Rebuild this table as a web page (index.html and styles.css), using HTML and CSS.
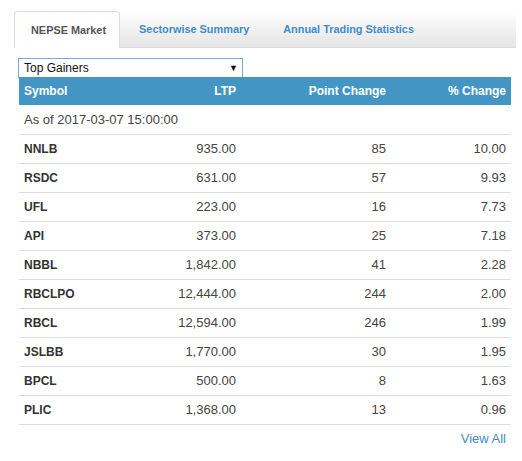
FILE: index.html
```html
<!DOCTYPE html>
<html lang="en">
<head>
    <meta charset="UTF-8">
    <meta name="viewport" content="width=device-width, initial-scale=1.0">
    <title>NEPSE Market</title>
    <link rel="stylesheet" href="styles.css">
</head>
<body>
    <div class="wrap">
        <ul class="tabs">
            <li class="tab active">NEPSE Market</li>
            <li class="tab">Sectorwise Summary</li>
            <li class="tab">Annual Trading Statistics</li>
        </ul>
        <div class="panel">
            <div class="picker">
                <span>Top Gainers</span>
                <span class="arrow">&#9660;</span>
            </div>
            <table class="market">
                <colgroup>
                    <col class="c-sym">
                    <col class="c-ltp">
                    <col class="c-pt">
                    <col class="c-pct">
                </colgroup>
                <thead>
                    <tr>
                        <th class="left">Symbol</th>
                        <th>LTP</th>
                        <th>Point Change</th>
                        <th>% Change</th>
                    </tr>
                </thead>
                <tbody>
                    <tr><td class="left asof" colspan="4">As of 2017-03-07 15:00:00</td></tr>
                    <tr><td class="left sym">NNLB</td><td>935.00</td><td>85</td><td>10.00</td></tr>
                    <tr><td class="left sym">RSDC</td><td>631.00</td><td>57</td><td>9.93</td></tr>
                    <tr><td class="left sym">UFL</td><td>223.00</td><td>16</td><td>7.73</td></tr>
                    <tr><td class="left sym">API</td><td>373.00</td><td>25</td><td>7.18</td></tr>
                    <tr><td class="left sym">NBBL</td><td>1,842.00</td><td>41</td><td>2.28</td></tr>
                    <tr><td class="left sym">RBCLPO</td><td>12,444.00</td><td>244</td><td>2.00</td></tr>
                    <tr><td class="left sym">RBCL</td><td>12,594.00</td><td>246</td><td>1.99</td></tr>
                    <tr><td class="left sym">JSLBB</td><td>1,770.00</td><td>30</td><td>1.95</td></tr>
                    <tr><td class="left sym">BPCL</td><td>500.00</td><td>8</td><td>1.63</td></tr>
                    <tr><td class="left sym">PLIC</td><td>1,368.00</td><td>13</td><td>0.96</td></tr>
                </tbody>
            </table>
            <div class="more"><a href="#">View All</a></div>
        </div>
    </div>
</body>
</html>
```

FILE: styles.css
```css
* {
    margin: 0;
    padding: 0;
    box-sizing: border-box;
}
body {
    font-family: 'Liberation Sans', Arial, sans-serif;
    font-size: 13px;
    color: #333;
    background: #fff;
}
.wrap {
    width: 516px;
    padding: 11px 0 0 14px;
}
.tabs {
    list-style: none;
    display: flex;
    height: 37px;
    background: linear-gradient(#ffffff, #e4e4e4);
    border-bottom: 1px solid #dcdcdc;
}
.tab {
    padding: 0 17px;
    line-height: 36px;
    font-size: 10.9px;
    font-weight: bold;
    color: #428bca;
}
.tab.active {
    color: #555;
    background: #fff;
    border: 1px solid #ddd;
    border-bottom: none;
    border-radius: 4px 4px 0 0;
    margin-bottom: -1px;
    margin-right: 2px;
    padding: 0 13px 0 16px;
}
.panel {
    padding: 10px 5px 0 4px;
}
.picker {
    width: 225px;
    height: 20px;
    border: 1px solid #7ba6e2;
    display: flex;
    justify-content: space-between;
    align-items: center;
    padding: 0 4px 0 5px;
    font-size: 12px;
    color: #111;
    margin-bottom: -1px;
}
.arrow {
    font-size: 9px;
    color: #111;
}
.market {
    width: 492px;
    margin-left: 1px;
    border-collapse: collapse;
    table-layout: fixed;
}
.c-sym { width: 112px; }
.c-ltp { width: 110px; }
.c-pt { width: 150px; }
.c-pct { width: 120px; }
.market th {
    background: #4396c4;
    color: #fff;
    font-size: 12px;
    font-weight: bold;
    height: 28px;
    text-align: right;
    padding: 0 5px;
}
.market td {
    height: 29px;
    border-bottom: 1px solid #ddd;
    text-align: right;
    padding: 0 5px;
    color: #444;
}
.market .left {
    text-align: left;
}
.market .sym {
    font-weight: bold;
    font-size: 12px;
    color: #333;
}
.market .asof {
    color: #444;
}
.more {
    text-align: right;
    padding: 6px 5px 0 0;
}
.more a {
    color: #428bca;
    text-decoration: none;
}
```
